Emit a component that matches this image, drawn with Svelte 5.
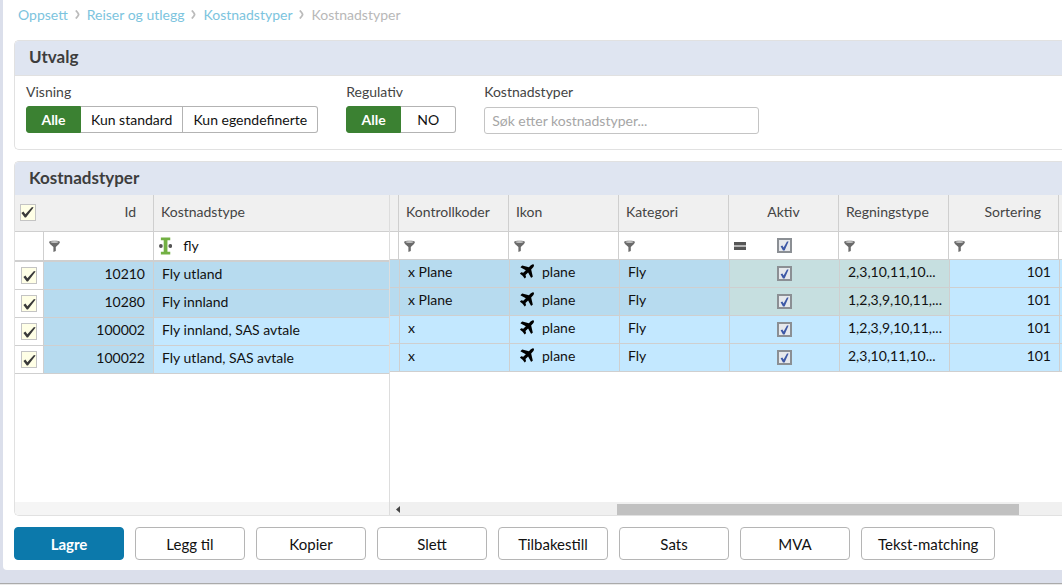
<script lang="ts">
  type Row = {
    id: number;
    name: string;
    code: string;
    icon: string;
    category: string;
    types: string;
    sort: number;
    standard: boolean;
  };

  const crumbs = ['Oppsett', 'Reiser og utlegg', 'Kostnadstyper'];
  const views = ['Alle', 'Kun standard', 'Kun egendefinerte'];
  const regulations = ['Alle', 'NO'];
  const actions = ['Lagre', 'Legg til', 'Kopier', 'Slett', 'Tilbakestill', 'Sats', 'MVA', 'Tekst-matching'];

  const rows: Row[] = [
    { id: 10210, name: 'Fly utland', code: 'x Plane', icon: 'plane', category: 'Fly', types: '2,3,10,11,10...', sort: 101, standard: true },
    { id: 10280, name: 'Fly innland', code: 'x Plane', icon: 'plane', category: 'Fly', types: '1,2,3,9,10,11,...', sort: 101, standard: true },
    { id: 100002, name: 'Fly innland, SAS avtale', code: 'x', icon: 'plane', category: 'Fly', types: '1,2,3,9,10,11,...', sort: 101, standard: false },
    { id: 100022, name: 'Fly utland, SAS avtale', code: 'x', icon: 'plane', category: 'Fly', types: '2,3,10,11,10...', sort: 101, standard: false },
  ];

  let view = $state('Alle');
  let regulation = $state('Alle');
  let search = $state('');
  let nameFilter = $state('fly');

  const scroll = { start: 33.8, size: 59.8 };
</script>

{#snippet funnel()}
  <button class="filter" aria-label="Filter">
    <svg width="11" height="12" viewBox="0 0 11 12" aria-hidden="true">
      <path d="M0 2 C0 0.2 11 0.2 11 2 L10 4 L6.8 7 V11 L4.4 12 V7 L1 4 Z" fill="#6a6a6a" />
      <ellipse cx="5.5" cy="2" rx="4" ry="0.8" fill="#dcdcdc" />
    </svg>
  </button>
{/snippet}

{#snippet plane()}
  <svg class="plane" width="18" height="18" viewBox="0 0 1792 1792" aria-hidden="true">
    <path d="M1568 160q44 52 12 148t-108 172l-161 161 160 696q5 19-12 33l-128 96q-7 6-19 6-4 0-7-1-15-3-21-16l-279-508-259 259 53 194q5 17-8 31l-96 96q-9 9-23 9h-2q-15-2-24-13l-189-252-252-189q-11-7-13-23-1-13 9-25l96-97q9-9 23-9 6 0 8 1l194 53 259-259-508-279q-14-8-17-24-2-16 9-27l128-128q14-13 30-8l665 159 160-160q76-76 172-108t148 12z" />
  </svg>
{/snippet}

{#snippet pick(label: string)}
  <label class="pick">
    <input type="checkbox" checked aria-label={label} />
    <svg width="13" height="12" viewBox="0 0 13 12" aria-hidden="true">
      <path d="M0.4 7 L2.4 5.6 L4.4 8.2 L11 1 L12.6 1.4 L5 11.4 L3.8 11.4 Z" fill="#3a3a3a" />
    </svg>
  </label>
{/snippet}

{#snippet active(label: string)}
  <label class="active">
    <input type="checkbox" checked aria-label={label} />
    <svg width="9" height="10" viewBox="0 0 9 10" aria-hidden="true">
      <path d="M0.6 5.2 L2.4 4.4 L3.6 6.4 L7 0.6 L8.6 0.6 L4.6 9.4 L3 9.4 Z" fill="#3d58a6" />
    </svg>
  </label>
{/snippet}

<div class="page">
  <main>
    <nav aria-label="Brødsmuler">
      {#each crumbs as crumb}
        <a href="#top">{crumb}</a>
        <svg width="5" height="9" viewBox="0 0 5 9" aria-hidden="true">
          <path d="M0.8 0.5 Q3.6 3.5 3.6 4.5 Q3.6 5.5 0.8 8.5" fill="none" stroke="#bbb" stroke-width="1.8" />
        </svg>
      {/each}
      <span>Kostnadstyper</span>
    </nav>

    <section class="panel">
      <h2>Utvalg</h2>
      <div class="selection">
        <div class="field" role="group" aria-labelledby="view-label">
          <span id="view-label">Visning</span>
          <div class="segments">
            {#each views as v}
              <button class:on={view === v} onclick={() => (view = v)}>{v}</button>
            {/each}
          </div>
        </div>
        <div class="field" role="group" aria-labelledby="reg-label">
          <span id="reg-label">Regulativ</span>
          <div class="segments">
            {#each regulations as r}
              <button class:on={regulation === r} onclick={() => (regulation = r)}>{r}</button>
            {/each}
          </div>
        </div>
        <div class="field">
          <label for="search">Kostnadstyper</label>
          <input id="search" type="text" placeholder="Søk etter kostnadstyper..." bind:value={search} />
        </div>
      </div>
    </section>

    <section class="panel list">
      <h2>Kostnadstyper</h2>
      <div class="grid">
        <div class="frozen">
          <table>
            <colgroup><col class="c-pick" /><col class="c-std" /><col class="c-name" /></colgroup>
            <thead>
              <tr class="head">
                <th class="plain">{@render pick('Velg alle')}</th>
                <th class="num">Id</th>
                <th>Kostnadstype</th>
              </tr>
              <tr class="filters">
                <td></td>
                <td>{@render funnel()}</td>
                <td>
                  <div class="contains">
                    <svg width="14" height="18" viewBox="0 0 14 18" aria-hidden="true">
                      <path d="M2 0 H12 V3 H9 V15 H12 V18 H2 V15 H5 V3 H2 Z" fill="#72b043" />
                      <circle cx="2" cy="9" r="2" fill="#555" />
                      <circle cx="12" cy="9" r="2" fill="#555" />
                    </svg>
                    <input type="text" aria-label="Filtrer kostnadstype" bind:value={nameFilter} />
                  </div>
                </td>
              </tr>
            </thead>
            <tbody>
              {#each rows as row (row.id)}
                <tr class:standard={row.standard}>
                  <td class="white">{@render pick(`Velg ${row.id}`)}</td>
                  <td class="num locked">{row.id}</td>
                  <td>{row.name}</td>
                </tr>
              {/each}
            </tbody>
          </table>
          <div class="track"></div>
        </div>

        <div class="scrolling">
          <table>
            <colgroup>
              <col class="c-rest" />
              <col class="c-std" /><col class="c-std" /><col class="c-std" />
              <col class="c-std" /><col class="c-std" /><col class="c-std" />
              <col class="c-rest" />
            </colgroup>
            <thead>
              <tr class="head">
                <th></th>
                <th>Kontrollkoder</th>
                <th>Ikon</th>
                <th>Kategori</th>
                <th class="mid">Aktiv</th>
                <th>Regningstype</th>
                <th class="num">Sortering</th>
                <th></th>
              </tr>
              <tr class="filters">
                <td></td>
                <td>{@render funnel()}</td>
                <td>{@render funnel()}</td>
                <td>{@render funnel()}</td>
                <td>
                  <div class="equals">
                    <svg width="12" height="8" viewBox="0 0 12 8" aria-hidden="true">
                      <path d="M0 0 H12 V8 H0 Z" fill="#b5b5b5" />
                      <path d="M0 0 H12 V3 H0 Z M0 5 H12 V8 H0 Z" fill="#555" />
                    </svg>
                    {@render active('Filtrer aktiv')}
                  </div>
                </td>
                <td>{@render funnel()}</td>
                <td>{@render funnel()}</td>
                <td></td>
              </tr>
            </thead>
            <tbody>
              {#each rows as row (row.id)}
                <tr class:standard={row.standard}>
                  <td></td>
                  <td>{row.code}</td>
                  <td><span class="icon">{@render plane()}{row.icon}</span></td>
                  <td>{row.category}</td>
                  <td class="mid green">{@render active(`Aktiv ${row.id}`)}</td>
                  <td class="green">{row.types}</td>
                  <td class="num editable">{row.sort}</td>
                  <td class="editable"></td>
                </tr>
              {/each}
            </tbody>
          </table>
          <div class="track bar">
            <svg width="4" height="7" viewBox="0 0 4 7" aria-hidden="true"><path d="M4 0 V7 L0 3.5 Z" fill="#444" /></svg>
            <div class="thumb" style:left="{scroll.start}%" style:width="{scroll.size}%"></div>
          </div>
        </div>
      </div>
    </section>

    <footer>
      {#each actions as action, i}
        <button class:primary={i === 0}>{action}</button>
      {/each}
    </footer>
  </main>
</div>

<style>
  :global(body) {
    background: #e9e9e9;
    overflow: hidden;
  }

  .page {
    padding: 0 0 13px 3px;
    background: #dbdfeb;
    border-bottom: 1px solid #aaa;
    font: 14px/18px Lato, sans-serif;
    color: #111;
  }

  .page * {
    box-sizing: border-box;
  }

  main {
    padding: 6px 0 10px 11px;
    background: #fff;
    border-bottom-left-radius: 4px;
  }

  button,
  input {
    font: inherit;
    color: inherit;
  }

  nav {
    display: flex;
    align-items: center;
    gap: 7px;
    height: 17px;
    margin: 0 0 17px 4px;
    color: #b8b8b8;
  }

  nav a {
    color: #7cc4de;
    text-decoration: none;
  }

  .panel {
    margin-bottom: 11px;
    border: 1px solid #e1e1e1;
    border-right: 0;
    border-radius: 5px 0 0 5px;
    overflow: hidden;
  }

  h2 {
    height: 35px;
    margin: 0;
    padding-left: 14px;
    background: #dfe5f1;
    border-bottom: 1px solid #e1e1e1;
    font-size: 17px;
    line-height: 32px;
    font-weight: 700;
    color: #3d3d3d;
  }

  .list h2 {
    height: 33px;
    border-bottom: 0;
  }

  .selection {
    display: flex;
    gap: 28px;
    padding: 7px 11px 15px;
  }

  .field {
    display: flex;
    flex-direction: column;
    gap: 5px;
    color: #444;
  }

  .field > input {
    width: 275px;
    height: 27px;
    margin-top: 1px;
    padding: 0 7px 1px;
    border: 1px solid #c4c4c4;
    border-radius: 3px;
    outline: 0;
  }

  .field > input::placeholder {
    color: #a6a6a6;
  }

  .segments {
    display: flex;
  }

  .segments button {
    min-width: 55px;
    height: 27px;
    padding: 0 10px;
    border: 1px solid #b3b3b3;
    border-left-width: 0;
    background: #fff;
    color: #111;
  }

  .segments button:last-child {
    border-radius: 0 3px 3px 0;
  }

  .segments button:first-child {
    border-left-width: 1px;
    border-radius: 3px 0 0 3px;
  }

  .segments .on {
    border-color: #3b8132;
    background: #3b8132;
    color: #fff;
    font-weight: 700;
  }

  .grid {
    display: flex;
    min-height: 320px;
  }

  .frozen,
  .scrolling {
    display: flex;
    flex-direction: column;
    justify-content: space-between;
    align-items: flex-start;
  }

  .frozen {
    border-right: 1px solid #ddd;
  }

  .scrolling {
    flex: 1;
    min-width: 0;
    overflow: hidden;
  }

  table {
    table-layout: fixed;
    width: 0;
    border-spacing: 0;
  }

  .c-pick {
    width: 29px;
  }

  .c-std {
    width: 110px;
  }

  .c-name {
    width: 235px;
  }

  .c-rest {
    width: 9px;
  }

  th,
  td {
    padding: 0 7px;
    border: 0 solid #cfcfcf;
    border-bottom-width: 1px;
    text-align: left;
    white-space: nowrap;
    overflow: hidden;
  }

  thead th,
  thead td,
  .frozen td {
    border-right-width: 1px;
  }

  .frozen tr > :last-child {
    border-right-width: 0;
  }

  th {
    height: 37px;
    padding: 0 7px 2px;
    background: #f0f0f0;
    font-weight: 400;
    color: #444;
  }

  .filters td {
    height: 28px;
    padding: 0 5px;
  }

  .frozen .filters td {
    height: 30px;
    border-bottom-width: 2px;
  }

  tbody td {
    height: 28px;
    padding: 0 8px 4px;
    background: #c3e8ff;
  }

  .scrolling tbody td {
    border-left-width: 1px;
  }

  .scrolling tbody td:first-child {
    border-left-width: 0;
  }

  .standard td,
  .locked {
    background: #b7dbef;
  }

  .standard .green {
    background: #c6dfe0;
  }

  .standard .editable {
    background: #c3e8ff;
  }

  tbody .white {
    background: #fff;
  }

  td:first-child,
  th:first-child {
    padding: 0;
  }

  .num {
    text-align: right;
  }

  th.num {
    padding-right: 17px;
  }

  .mid {
    text-align: center;
  }

  tbody .mid {
    padding-bottom: 2px;
  }

  th.plain {
    padding: 0 4px 2px 0;
    border-right-width: 0;
  }

  .filter {
    display: flex;
    padding: 0;
    border: 0;
    background: none;
  }

  .contains,
  .equals,
  .icon {
    display: flex;
    align-items: center;
  }

  .contains input {
    width: 100%;
    padding: 0 0 0 11px;
    border: 0;
    background: none;
    outline: 0;
  }

  .equals {
    gap: 31px;
  }

  .icon {
    gap: 6px;
  }

  .plane {
    fill: #000;
  }

  .pick,
  .active {
    display: inline-grid;
    place-items: center;
    vertical-align: middle;
  }

  .pick > *,
  .active > * {
    grid-area: 1 / 1;
  }

  .pick {
    display: grid;
  }

  .pick input,
  .active input {
    appearance: none;
    margin: 0;
    width: 16px;
    height: 17px;
    border: 1px solid #c4c4c4;
    background: #ffffe6;
  }

  .active input {
    width: 15px;
    height: 15px;
    border: 2px solid #8b8f94;
    background: #e6e8ec;
  }

  .pick svg,
  .active svg {
    pointer-events: none;
  }

  .track {
    width: 100%;
    height: 13px;
    background: #f5f5f5;
  }

  .bar {
    position: relative;
    padding: 4px 0 0 6px;
    line-height: 0;
    background: #f0f0f0;
  }

  .thumb {
    position: absolute;
    top: 2px;
    bottom: 0;
    background: #c1c1c1;
  }

  footer {
    display: flex;
    gap: 11px;
  }

  footer button {
    min-width: 110px;
    height: 33px;
    padding: 0 16px;
    border: 1px solid #b5b5b5;
    border-radius: 4px;
    background: #fff;
    font-size: 15px;
  }

  footer .primary {
    border-color: #0c79ab;
    background: #0c79ab;
    color: #fff;
    font-weight: 700;
  }
</style>
